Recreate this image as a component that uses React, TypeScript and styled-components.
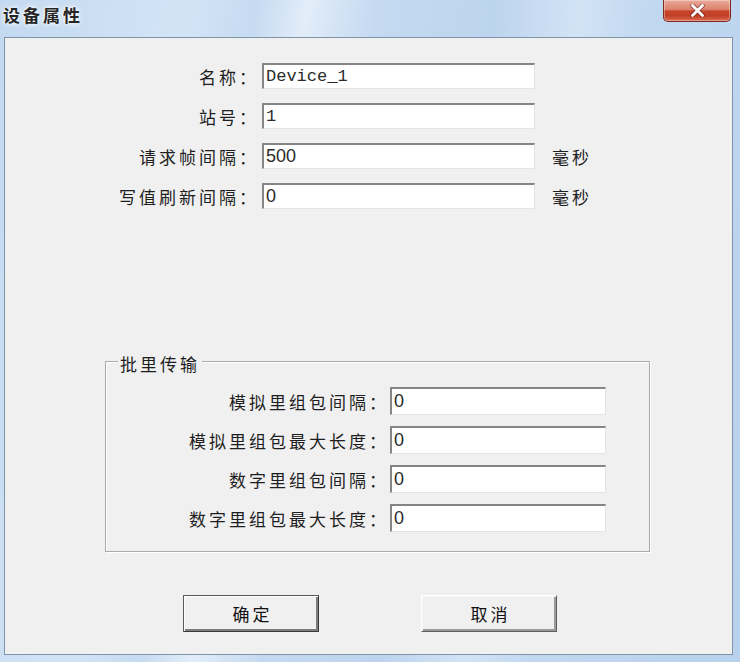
import { Fragment } from 'react';
import styled, { createGlobalStyle } from 'styled-components';

const GlobalStyle = createGlobalStyle`
    html, body {
        margin: 0;
        padding: 0;
    }
    body {
        font-family: "Noto Sans CJK SC", "Liberation Sans", sans-serif;
        background: #b9d1ea;
    }
`;

const Window = styled.div`
    width: 740px;
    height: 662px;
    display: flex;
    flex-direction: column;
    overflow: hidden;
    background: linear-gradient(100deg, #c3d9f0 0%, #d3e4f6 22%, #c6dbf1 30%, #e2edf9 36%, #c5daf1 44%, #bdd4ee 58%, #d2e3f5 68%, #c1d8f0 76%, #b8d1ec 100%);
`;

const TitleBar = styled.div`
    height: 37px;
    display: flex;
    align-items: flex-start;
    justify-content: space-between;
    flex-shrink: 0;
`;

const Caption = styled.div`
    margin: 4px 0 0 3px;
    font-size: 17px;
    line-height: 22px;
    letter-spacing: 3px;
    font-weight: 700;
    color: #262626;
    text-shadow: 0 0 6px #fff, 0 0 3px #fff;
`;

const CloseButton = styled.div`
    width: 66px;
    height: 21px;
    margin-right: 9px;
    display: flex;
    align-items: center;
    justify-content: center;
    border: 1px solid #7a2a1e;
    border-top: none;
    border-radius: 0 0 5px 5px;
    background: linear-gradient(#eaa99a 0%, #dc826e 45%, #c8452c 52%, #c23f27 75%, #dc6a52 100%);
    box-shadow: inset 0 0 0 1px rgba(255, 255, 255, 0.35);
`;

const Client = styled.div`
    flex: 1;
    margin: 0 7px 7px 4px;
    border: 1px solid #7f93a9;
    background: #f0f0f0;
    display: flex;
    flex-direction: column;
`;

const FormGrid = styled.div<{ $label: number; $input: number; $gap: number; $row: number; $rowH: number }>`
    display: grid;
    grid-template-columns: ${p => p.$label}px ${p => p.$input}px auto;
    grid-auto-rows: ${p => p.$rowH}px;
    column-gap: ${p => p.$gap}px;
    row-gap: ${p => p.$row}px;
    align-items: center;
`;

const TopForm = styled(FormGrid)`
    margin-top: 25px;
`;

const Label = styled.div`
    text-align: right;
    white-space: nowrap;
    font-size: 17px;
    letter-spacing: 3px;
    color: #1e1e1e;
`;

const Unit = styled.div`
    margin-left: 14px;
    font-size: 17px;
    letter-spacing: 3px;
    color: #1e1e1e;
`;

const Field = styled.input<{ $mono?: boolean }>`
    box-sizing: border-box;
    width: 100%;
    height: 100%;
    margin: 0;
    padding: 0 0 0 2px;
    outline: none;
    background: #fff;
    border-top: 2px solid #858585;
    border-left: 2px solid #858585;
    border-right: 1px solid #e4e4e4;
    border-bottom: 1px solid #e4e4e4;
    color: #2a2a2a;
    font-family: ${p => (p.$mono ? '"Liberation Mono", monospace' : '"Liberation Sans", sans-serif')};
    font-size: ${p => (p.$mono ? '17px' : '18px')};
`;

const Group = styled.div`
    position: relative;
    margin: 152px 0 0 100px;
    width: 545px;
    box-sizing: border-box;
    padding: 25px 0 19px;
    border: 1px solid #a9a9a9;
    box-shadow: inset 1px 1px 0 #fff, 1px 1px 0 #fff;
`;

const GroupTitle = styled.div`
    position: absolute;
    top: -9px;
    left: 12px;
    padding: 0 2px;
    background: #f0f0f0;
    font-size: 17px;
    line-height: 22px;
    letter-spacing: 3px;
    color: #1e1e1e;
`;

const ButtonRow = styled.div`
    display: flex;
    gap: 102px;
    margin-top: 43px;
    padding-left: 178px;
`;

const PushButton = styled.button<{ $default?: boolean }>`
    width: 136px;
    height: 37px;
    padding: 0 0 0 3px;
    background: #f0f0f0;
    font-family: "Noto Sans CJK SC", sans-serif;
    font-size: 17px;
    letter-spacing: 3px;
    color: #111;
    border: 1px solid;
    border-color: ${p => (p.$default ? '#5a5a5a #3a3a3a #3a3a3a #5a5a5a' : '#ffffff #5f5f5f #5f5f5f #ffffff')};
    box-shadow: ${p => (p.$default
        ? 'inset 1px 1px 0 #fdfdfd, inset -2px -2px 0 #7d7d7d'
        : 'inset 1px 1px 0 #f6f6f6, inset -2px -2px 0 #9a9a9a')};
`;

const topFields = [
    { label: '名称：', value: 'Device_1', mono: true },
    { label: '站号：', value: '1', mono: true },
    { label: '请求帧间隔：', value: '500', unit: '毫秒' },
    { label: '写值刷新间隔：', value: '0', unit: '毫秒' },
];

const batchFields = [
    { label: '模拟里组包间隔：', value: '0' },
    { label: '模拟里组包最大长度：', value: '0' },
    { label: '数字里组包间隔：', value: '0' },
    { label: '数字里组包最大长度：', value: '0' },
];

const App = () => {
    return (
        <Window>
            <GlobalStyle />
            <TitleBar>
                <Caption>设备属性</Caption>
                <CloseButton>
                    <svg width="15" height="13" viewBox="0 0 15 13">
                        <path d="M2.5 1.5 L12.5 11.5 M12.5 1.5 L2.5 11.5" stroke="rgba(90,25,15,0.55)" strokeWidth="4.6" strokeLinecap="round" />
                        <path d="M2.5 1.5 L12.5 11.5 M12.5 1.5 L2.5 11.5" stroke="#fff" strokeWidth="2.8" strokeLinecap="round" />
                    </svg>
                </CloseButton>
            </TitleBar>
            <Client>
                <TopForm $label={254} $input={273} $gap={3} $row={14} $rowH={26}>
                    {topFields.map(f => (
                        <Fragment key={f.label}>
                            <Label>{f.label}</Label>
                            <Field $mono={f.mono} defaultValue={f.value} />
                            <Unit>{f.unit ?? ''}</Unit>
                        </Fragment>
                    ))}
                </TopForm>
                <Group>
                    <GroupTitle>批里传输</GroupTitle>
                    <FormGrid $label={283} $input={216} $gap={1} $row={11} $rowH={28}>
                        {batchFields.map(f => (
                            <Fragment key={f.label}>
                                <Label>{f.label}</Label>
                                <Field defaultValue={f.value} />
                                <span />
                            </Fragment>
                        ))}
                    </FormGrid>
                </Group>
                <ButtonRow>
                    <PushButton $default>确定</PushButton>
                    <PushButton>取消</PushButton>
                </ButtonRow>
            </Client>
        </Window>
    );
};

export default App;
